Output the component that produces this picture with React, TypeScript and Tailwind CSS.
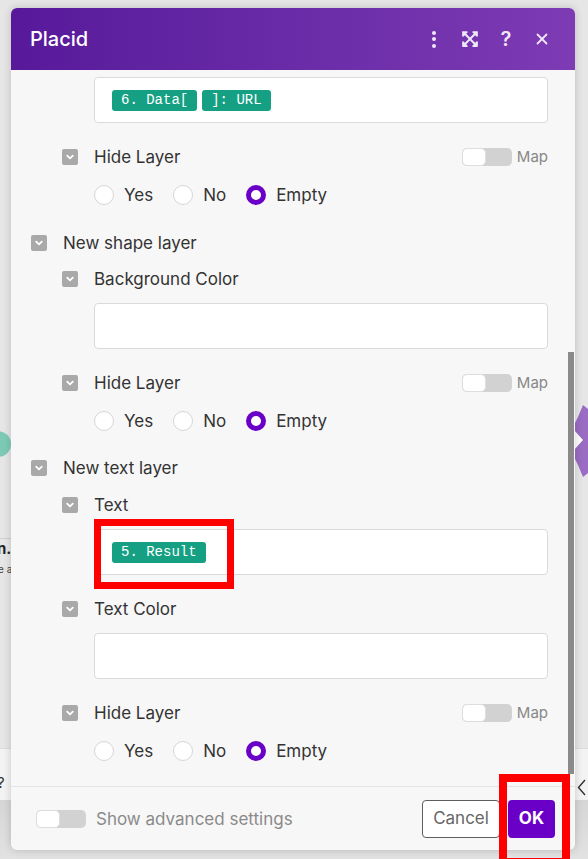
import React from 'react';
import { FaExpandArrowsAlt } from 'react-icons/fa';
import { X } from 'lucide-react';

const Checkbox = () => (
  <span className="w-4 h-4 rounded-[2px] bg-[#a9a9a9] flex items-center justify-center shrink-0">
    <svg width="10" height="10" viewBox="0 0 10 10">
      <path d="M2.2 3.6 L5 6.4 L7.8 3.6" stroke="white" strokeWidth="1.8" fill="none" strokeLinecap="round" strokeLinejoin="round" />
    </svg>
  </span>
);

const Toggle = () => (
  <span className="w-[50px] h-[18px] rounded-[5px] bg-[#d2d2d2] flex shrink-0">
    <span className="w-[24px] h-full rounded-[5px] bg-white border border-[#dedede]" />
  </span>
);

const Pill = ({ text }: { text: string }) => (
  <span className="h-[21px] px-[9px] rounded-[3px] bg-[#16a083] text-white text-[14px] leading-none flex items-center font-['Liberation_Mono',monospace] whitespace-pre">
    {text}
  </span>
);

const Field = ({ pills }: { pills?: string[] }) => (
  <div className="h-[46px] ml-[63px] bg-white border border-[#dadada] rounded-[4px] flex items-center gap-[5px] px-[17px]">
    {pills?.map((p) => <Pill key={p} text={p} />)}
  </div>
);

const Row = ({ label, level, map, className }: { label: string; level: 1 | 2; map?: boolean; className: string }) => (
  <div className={`h-6 flex items-center justify-between ${level === 2 ? 'ml-[31px]' : ''} ${className}`}>
    <div className="flex items-center gap-4">
      <Checkbox />
      <span className="text-[17px] text-[#333] pt-[2px]">{label}</span>
    </div>
    {map && (
      <div className="flex items-center gap-[5px]">
        <Toggle />
        <span className="text-[15px] text-[#888] pt-[1px]">Map</span>
      </div>
    )}
  </div>
);

const Radio = ({ label, checked }: { label: string; checked?: boolean }) => (
  <div className="flex items-center gap-[10px]">
    <span
      className={
        checked
          ? 'w-5 h-5 rounded-full border-[5px] border-[#6a00c8] bg-white'
          : 'w-5 h-5 rounded-full border border-[#d6d6d6] bg-white'
      }
    />
    <span className="text-[17px] text-[#333] pt-[2px]">{label}</span>
  </div>
);

const Radios = () => (
  <div className="h-6 ml-[63px] mt-[14px] flex items-center gap-5">
    <Radio label="Yes" />
    <Radio label="No" />
    <Radio label="Empty" checked />
  </div>
);

export default function App() {
  return (
    <div className="relative w-[588px] h-[859px] overflow-hidden bg-[#e6e6e6] font-['Inter',sans-serif]">
      {/* page behind the dialog */}
      <div className="absolute left-0 right-0 top-[748px] h-[52px] bg-[#f3f3f3] border-t border-[#dcdcdc]" />
      <div className="absolute left-0 right-0 top-[800px] bottom-0 bg-gradient-to-b from-[#d6d6d6] to-[#e2e2e2]" />
      <div className="absolute left-[-16px] top-[431px] w-[27px] h-[26px] rounded-full bg-[#7ccab6]" />
      <div className="absolute left-[-3px] top-[538px] text-[15px] font-bold text-[#222] border-t border-[#cfcfcf] leading-[20px]">n.</div>
      <div className="absolute left-[-2px] top-[562px] text-[10px] text-[#444]">e a</div>
      <div className="absolute left-[-3px] top-[772px] text-[15px] text-[#333]">?</div>
      <svg className="absolute left-[574px] top-[405px]" width="14" height="72" viewBox="0 0 14 72">
        <path d="M9 0 L14 4 L14 68 L9 72 L4 60 L0 52 L0 20 L4 12 Z" fill="#9a6cc3" />
        <path d="M0 25 L9 35 L0 45 Z" fill="white" />
      </svg>
      <svg className="absolute left-[577px] top-[779px]" width="10" height="17" viewBox="0 0 10 17">
        <path d="M8 1 L1.5 8.5 L8 16" stroke="#333" strokeWidth="1.4" fill="none" />
      </svg>

      {/* dialog */}
      <div className="absolute left-[11px] top-[8px] w-[564px] h-[842px] rounded-[6px] overflow-hidden bg-[#f7f7f7] shadow-[0_0_8px_rgba(0,0,0,0.18)] flex flex-col">
        <div className="h-[62px] shrink-0 bg-gradient-to-r from-[#57199a] to-[#7d3bb4] flex items-center justify-between pl-[19px] pr-[21px]">
          <span className="text-white text-[20px] font-medium">Placid</span>
          <div className="flex items-center gap-[12px] text-[#efe6f7]">
            <span className="w-6 h-6 flex flex-col items-center justify-center gap-[2.5px]">
              <span className="w-[4px] h-[4px] rounded-full bg-current" />
              <span className="w-[4px] h-[4px] rounded-full bg-current" />
              <span className="w-[4px] h-[4px] rounded-full bg-current" />
            </span>
            <span className="w-6 h-6 flex items-center justify-center">
              <FaExpandArrowsAlt size={18} />
            </span>
            <span className="w-6 h-6 flex items-center justify-center text-[20px] font-semibold leading-none">?</span>
            <span className="w-6 h-6 flex items-center justify-center">
              <X size={18} strokeWidth={2.4} />
            </span>
          </div>
        </div>

        <div className="relative flex-1 overflow-hidden">
          <div className="flex flex-col pl-[20px] pr-[27px] pt-[7px]">
            <Field pills={['6. Data[', ']: URL']} />
            <Row label="Hide Layer" level={2} map className="mt-[22px]" />
            <Radios />
            <Row label="New shape layer" level={1} className="mt-[24px]" />
            <Row label="Background Color" level={2} className="mt-[12px]" />
            <div className="mt-[12px]"><Field /></div>
            <Row label="Hide Layer" level={2} map className="mt-[22px]" />
            <Radios />
            <Row label="New text layer" level={1} className="mt-[23px]" />
            <Row label="Text" level={2} className="mt-[13px]" />
            <div className="mt-[12px]"><Field pills={['5. Result']} /></div>
            <Row label="Text Color" level={2} className="mt-[22px]" />
            <div className="mt-[12px]"><Field /></div>
            <Row label="Hide Layer" level={2} map className="mt-[22px]" />
            <Radios />
          </div>
          <div className="absolute right-[1px] top-[282px] w-[6px] h-[422px] bg-[#8a8a8a]" />
        </div>

        <div className="h-[64px] shrink-0 border-t border-[#e4e4e4] flex items-center justify-between pl-[25px] pr-[20px]">
          <div className="flex items-center gap-[10px]">
            <Toggle />
            <span className="text-[17px] text-[#8a8a8a] pt-[2px]">Show advanced settings</span>
          </div>
          <div className="flex items-center gap-[8px]">
            <button className="w-[78px] h-[38px] rounded-[4px] border border-[#5e5e5e] text-[17px] text-[#666] bg-white">Cancel</button>
            <button className="w-[47px] h-[38px] rounded-[4px] bg-[#6a00c8] text-white text-[17px] font-bold">OK</button>
          </div>
        </div>
      </div>

      {/* annotation boxes */}
      <div className="absolute left-[94px] top-[519px] w-[140px] h-[70px] border-[7px] border-[#ff0000]" />
      <div className="absolute left-[499px] top-[774px] w-[71px] h-[92px] border-[8px] border-[#ff0000]" />
    </div>
  );
}
